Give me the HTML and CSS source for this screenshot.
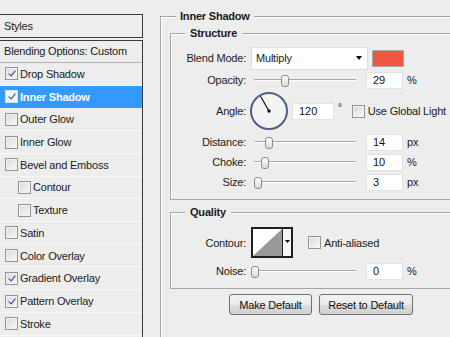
FILE: index.html
```html
<!DOCTYPE html>
<html lang="en">
<head>
    <meta charset="UTF-8">
    <meta name="viewport" content="width=device-width, initial-scale=1.0">
    <title>Layer Style - Inner Shadow</title>
    <link rel="stylesheet" href="styles.css">
</head>
<body>
    <div class="dialog">
        <aside class="styles-panel">
            <div class="panel-head">Styles</div>
            <ul class="style-list">
                <li class="list-head">Blending Options: Custom</li>
                <li class="style-item"><span class="check on"></span>Drop Shadow</li>
                <li class="style-item selected"><span class="check on"></span>Inner Shadow</li>
                <li class="style-item"><span class="check"></span>Outer Glow</li>
                <li class="style-item"><span class="check"></span>Inner Glow</li>
                <li class="style-item"><span class="check"></span>Bevel and Emboss</li>
                <li class="style-item sub"><span class="check"></span>Contour</li>
                <li class="style-item sub"><span class="check"></span>Texture</li>
                <li class="style-item"><span class="check"></span>Satin</li>
                <li class="style-item"><span class="check"></span>Color Overlay</li>
                <li class="style-item"><span class="check on"></span>Gradient Overlay</li>
                <li class="style-item"><span class="check on"></span>Pattern Overlay</li>
                <li class="style-item"><span class="check"></span>Stroke</li>
            </ul>
        </aside>

        <main class="settings">
            <fieldset class="group outer">
                <legend>Inner Shadow</legend>

                <fieldset class="group inner structure">
                    <legend>Structure</legend>

                    <div class="row row-blend">
                        <label>Blend Mode:</label>
                        <div class="select">Multiply<span class="arrow"></span></div>
                        <span class="swatch"></span>
                    </div>

                    <div class="row">
                        <label>Opacity:</label>
                        <div class="slider"><div class="track"><span class="thumb" style="left: 29%"></span></div></div>
                        <input class="num" value="29">
                        <span class="unit">%</span>
                    </div>

                    <div class="row row-angle">
                        <label>Angle:</label>
                        <svg class="dial" width="40" height="40" viewBox="0 0 40 40">
                            <circle cx="20" cy="20" r="18" fill="#f3f3f3" stroke="#4f5f86" stroke-width="2"/>
                            <line x1="20" y1="20" x2="11.5" y2="5.3" stroke="#111" stroke-width="1.2"/>
                            <circle cx="20" cy="20" r="1.7" fill="#111"/>
                        </svg>
                        <input class="num angle" value="120">
                        <span class="degree">°</span>
                        <span class="check"></span>
                        <span class="check-label">Use Global Light</span>
                    </div>

                    <div class="row">
                        <label>Distance:</label>
                        <div class="slider"><div class="track"><span class="thumb" style="left: 14%"></span></div></div>
                        <input class="num" value="14">
                        <span class="unit">px</span>
                    </div>

                    <div class="row">
                        <label>Choke:</label>
                        <div class="slider"><div class="track"><span class="thumb" style="left: 10%"></span></div></div>
                        <input class="num" value="10">
                        <span class="unit">%</span>
                    </div>

                    <div class="row">
                        <label>Size:</label>
                        <div class="slider"><div class="track"><span class="thumb" style="left: 3%"></span></div></div>
                        <input class="num" value="3">
                        <span class="unit">px</span>
                    </div>
                </fieldset>

                <fieldset class="group inner quality">
                    <legend>Quality</legend>

                    <div class="row row-contour">
                        <label>Contour:</label>
                        <svg class="contour" width="42" height="31" viewBox="0 0 42 31">
                            <rect x="0" y="0" width="42" height="31" fill="#fff"/>
                            <polygon points="2,29 31,2 31,29" fill="#999"/>
                            <rect x="32" y="1" width="9" height="29" fill="#f6f6f6"/>
                            <line x1="31.5" y1="1" x2="31.5" y2="30" stroke="#222" stroke-width="1"/>
                            <polygon points="34,13 39,13 36.5,16" fill="#000"/>
                            <rect x="1" y="1" width="40" height="29" fill="none" stroke="#1f1f1f" stroke-width="2"/>
                        </svg>
                        <span class="check aa"></span>
                        <span class="check-label">Anti-aliased</span>
                    </div>

                    <div class="row row-noise">
                        <label>Noise:</label>
                        <div class="slider"><div class="track"><span class="thumb" style="left: 0%"></span></div></div>
                        <input class="num" value="0">
                        <span class="unit">%</span>
                    </div>
                </fieldset>

                <div class="buttons">
                    <button class="make-default">Make Default</button>
                    <button class="reset-default">Reset to Default</button>
                </div>
            </fieldset>
        </main>
    </div>
</body>
</html>
```

FILE: styles.css
```css
* { box-sizing: border-box; }
body { margin: 0; background: #ededed; font: 11px "Liberation Sans", Arial, sans-serif; letter-spacing: -0.2px; color: #1b1b1b; overflow: hidden; }
.dialog { display: flex; width: 450px; height: 337px; }

/* left list of styles */
.styles-panel { width: 143px; flex: none; display: flex; flex-direction: column; padding-top: 14px; }
.panel-head { height: 24px; line-height: 22px; padding-left: 4px; border: 1px solid #3a3a3a; border-left: none; }
.style-list { flex: 1; list-style: none; margin: 2px 0 0; padding: 0; border-right: 1px solid #3a3a3a; }
.list-head { height: 23px; line-height: 21px; padding-left: 4px; border-top: 1px solid #3a3a3a; border-bottom: 1px solid #b4b4b4; }
.style-item { height: 22.73px; display: flex; align-items: center; padding-left: 5px; border-bottom: 1px solid #f8f8f8; }
.style-item.sub { padding-left: 18px; }
.style-item.selected { background: #3399ff; color: #fff; font-weight: bold; border-bottom-color: #3399ff; }

.check { width: 13px; height: 13px; flex: none; margin-right: 2px; display: flex; align-items: center; justify-content: center; border: 1px solid #949494; background: linear-gradient(135deg, #d9d9d9, #f8f8f8); box-shadow: inset 0 0 0 1px #f3f3f3; }
.check.on::after { content: ""; width: 3px; height: 6px; margin-top: -2px; border: solid #2a4896; border-width: 0 1.5px 1.5px 0; transform: rotate(38deg); }
.selected .check { background: #f4f4f4; border-color: #cfe3f7; }

/* right settings */
.settings { flex: 1; min-width: 0; padding: 10px 0 0 17px; }
.group { margin: 0; padding: 0; min-width: 0; border: 1px solid #a6a6a6; border-right: none; box-shadow: inset 1px 1px 0 #fff; }
.group legend { font-weight: bold; line-height: 13px; background: #ededed; }
.outer { height: 327px; padding: 4px 0 0 0; border-bottom: none; }
.outer > legend { margin-left: 15px; padding: 0 4px; }
.inner { margin-left: 9px; }
.inner > legend { margin-left: 14px; padding: 0 5px; }
.structure { padding: 6px 0 7px; }
.quality { margin-top: 6px; padding: 8px 0 7px; }

.row { display: flex; align-items: center; height: 20px; }
.row label { width: 75px; margin-right: 5px; text-align: right; flex: none; }
.row-blend { height: 24px; }
.row-angle { height: 42px; }
.row-contour { height: 31px; }
.row-noise { margin-top: 3px; }

.select { width: 117px; height: 23px; display: flex; align-items: center; justify-content: space-between; padding: 0 5px 0 4px; background: #fff; border: 1px solid #dedede; }
.arrow { width: 0; height: 0; border-left: 3px solid transparent; border-right: 3px solid transparent; border-top: 4px solid #000; }
.swatch { width: 32px; height: 17px; margin-left: 4px; background: #ee5841; border: 1px solid #a8a8a8; }

.slider { width: 111px; flex: none; }
.track { position: relative; margin: 0 6px 0 3px; height: 2px; border-top: 1px solid #a9a9a9; border-bottom: 1px solid #fff; }
.thumb { position: absolute; top: -5px; width: 8px; height: 12px; margin-left: -3px; border: 1px solid #8c8c8c; border-radius: 3px; background: linear-gradient(#fdfdfd, #dadada); }

.num { width: 37px; height: 17px; margin: 0 0 0 4px; padding: 0 0 0 6px; border: 1px solid #e2e2e2; background: #fff; font: 11px "Liberation Sans", Arial, sans-serif; color: #111; outline: none; }
.unit { margin-left: 4px; }

.dial { margin-left: -2px; flex: none; }
.num.angle { width: 42px; margin-left: 3px; }
.degree { align-self: flex-start; margin: 12px 0 0 4px; font-size: 10px; }
.row-angle .check { margin-left: 10px; margin-right: 3px; }
.contour { flex: none; }
.check.aa { margin-left: 15px; margin-right: 3px; }

.buttons { display: flex; gap: 7px; margin-top: 5px; padding-left: 68px; }
.buttons button { height: 21px; padding: 0; border: 1px solid #707070; border-radius: 3px; background: linear-gradient(#f3f3f3 0%, #ebebeb 50%, #dddddd 51%, #d0d0d0 100%); font: 11px "Liberation Sans", Arial, sans-serif; letter-spacing: -0.2px; color: #111; }
.make-default { width: 83px; }
.reset-default { width: 94px; }
```
